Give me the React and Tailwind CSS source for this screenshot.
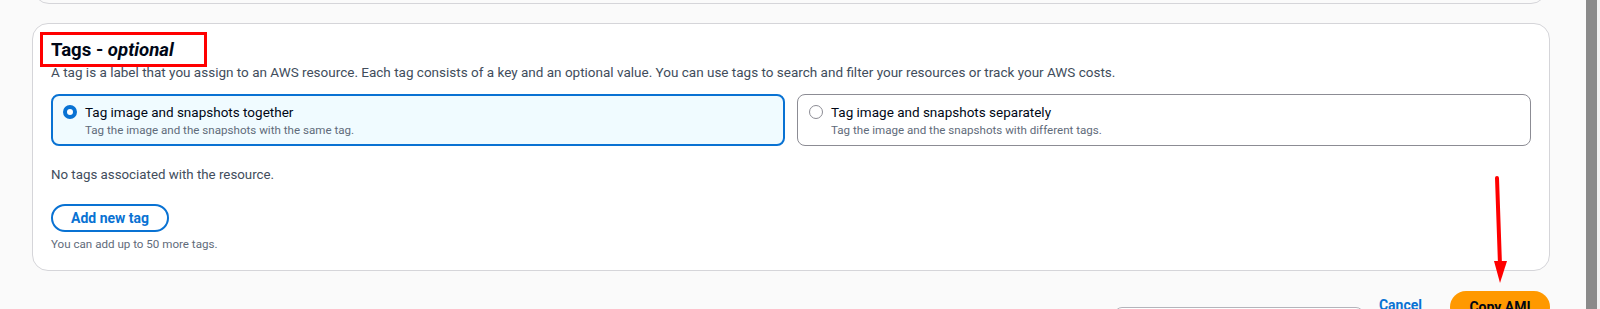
import React from "react";

function RadioTile({ selected, title, desc }) {
  return (
    <div
      className={
        selected
          ? "flex items-start gap-[8px] rounded-[8px] border-2 border-[#0972d3] bg-[#f0fbff] px-[10px] py-[6px]"
          : "flex items-start gap-[8px] rounded-[8px] border border-[#8c8c94] bg-white px-[11px] py-[7px]"
      }
    >
      <div className="flex h-[20px] items-center">
        {selected ? (
          <div className="h-[14px] w-[14px] rounded-full border-[4px] border-[#0972d3] bg-white" />
        ) : (
          <div className="h-[14px] w-[14px] rounded-full border-[1.5px] border-[#8c8c94] bg-white" />
        )}
      </div>
      <div className="flex flex-col">
        <span className="text-[13.5px] leading-[20px] text-[#000716]">{title}</span>
        <span className="text-[11.6px] leading-[16px] text-[#5f6b7a]">{desc}</span>
      </div>
    </div>
  );
}

export default function App() {
  return (
    <div
      className="relative flex h-[309px] w-[1600px] overflow-hidden bg-[#fafafa]"
      style={{ fontFamily: 'Roboto, "Noto Sans", Arial, sans-serif' }}
    >
      <div className="flex flex-1 flex-col pl-[32px] pr-[36px]">
        {/* previous card bottom */}
        <div className="-mt-[36px] ml-[1px] mr-[3px] h-[40px] shrink-0 rounded-b-[16px] border border-[#d5d5d9] bg-[#fafafa]" />

        {/* main card */}
        <div className="mt-[19px] flex shrink-0 flex-col rounded-[16px] border border-[#d5d5d9] bg-white pl-[18px] pr-[18px] pt-[14px] pb-[18px]">
          <h2 className="text-[18.6px] font-bold leading-[24px] text-[#000716]">
            Tags - <i className="font-bold">optional</i>
          </h2>
          <p className="text-[13.5px] leading-[20px] text-[#414d5c]">
            A tag is a label that you assign to an AWS resource. Each tag consists of a key and an optional value. You can use tags to search and filter your resources or track your AWS costs.
          </p>
          <div className="mt-[12px] grid grid-cols-2 gap-[12px]">
            <RadioTile
              selected
              title="Tag image and snapshots together"
              desc="Tag the image and the snapshots with the same tag."
            />
            <RadioTile
              title="Tag image and snapshots separately"
              desc="Tag the image and the snapshots with different tags."
            />
          </div>
          <p className="mt-[19px] text-[13.3px] leading-[20px] text-[#414d5c]">
            No tags associated with the resource.
          </p>
          <div className="mt-[19px]">
            <button className="h-[28px] rounded-full border-2 border-[#0972d3] px-[18px] text-[14px] font-bold leading-[20px] text-[#0972d3]">
              Add new tag
            </button>
          </div>
          <p className="mt-[4px] text-[11.6px] leading-[16px] text-[#5f6b7a]">
            You can add up to 50 more tags.
          </p>
        </div>

        {/* footer */}
        <div className="flex shrink-0 items-start justify-end">
          <div className="mt-[36px] mr-[15px] h-[10px] w-[250px] rounded-t-[8px] border border-[#b4b4bb] bg-white" />
          <button className="mt-[24px] mr-[28px] text-[14px] font-bold leading-[20px] text-[#0972d3]">
            Cancel
          </button>
          <button className="mt-[20px] h-[32px] w-[100px] rounded-full bg-[#ff9900] text-[14px] font-bold leading-[20px] text-[#000716]">
            Copy AMI
          </button>
        </div>
      </div>

      {/* scrollbar */}
      <div className="w-[11px] bg-[#8a8a8a]" />
      <div className="w-[3px] bg-[#f1f1f1]" />

      {/* annotations */}
      <div className="absolute left-[40px] top-[32px] h-[35px] w-[167px] border-[3px] border-[#ff0000]" />
      <svg className="absolute left-[1488px] top-[175px]" width="24" height="112" viewBox="0 0 24 112">
        <line x1="9" y1="3" x2="12" y2="90" stroke="#ff0000" strokeWidth="4" strokeLinecap="round" />
        <polygon points="6,86 19,86 12,108" fill="#ff0000" />
      </svg>
    </div>
  );
}
